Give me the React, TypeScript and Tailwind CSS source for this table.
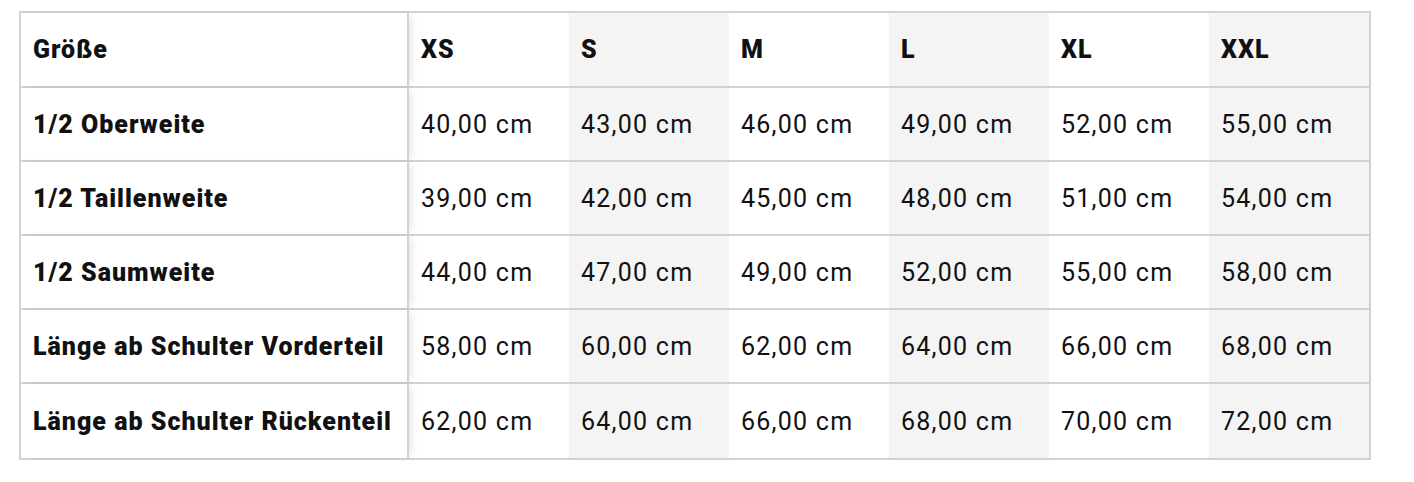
const sizes = ['XS', 'S', 'M', 'L', 'XL', 'XXL'];

const rows: { label: string; values: string[] }[] = [
  { label: '1/2 Oberweite', values: ['40,00', '43,00', '46,00', '49,00', '52,00', '55,00'] },
  { label: '1/2 Taillenweite', values: ['39,00', '42,00', '45,00', '48,00', '51,00', '54,00'] },
  { label: '1/2 Saumweite', values: ['44,00', '47,00', '49,00', '52,00', '55,00', '58,00'] },
  { label: 'Länge ab Schulter Vorderteil', values: ['58,00', '60,00', '62,00', '64,00', '66,00', '68,00'] },
  { label: 'Länge ab Schulter Rückenteil', values: ['62,00', '64,00', '66,00', '68,00', '70,00', '72,00'] },
];

function Cell({ index, bold, children }: { index: number; bold?: boolean; children: React.ReactNode }) {
  const shaded = index % 2 === 1;
  return (
    <div
      className={
        'flex items-center pl-3 ' +
        (shaded ? 'bg-[#f4f4f4] ' : 'bg-white ') +
        (bold ? 'font-black tracking-[0.04em]' : 'font-normal tracking-[0.05em]')
      }
    >
      {children}
    </div>
  );
}

function Row({ label, cells, last, header }: { label: string; cells: string[]; last?: boolean; header?: boolean }) {
  return (
    <div
      className={
        'grid grid-cols-[388px_repeat(6,160px)] box-border ' +
        (header ? 'h-[75px] ' : 'h-[74px] ') +
        (last ? '' : 'border-b-2 border-[#d2d2d2]')
      }
    >
      <div className="relative z-10 flex items-center pl-3 font-black tracking-[0.04em] bg-white border-r-2 border-[#d2d2d2] shadow-[5px_0_8px_-3px_rgba(0,0,0,0.12)]">
        {label}
      </div>
      {cells.map((c, i) => (
        <Cell key={i} index={i} bold={header}>
          {c}
        </Cell>
      ))}
    </div>
  );
}

export default function App() {
  return (
    <div className="min-h-[482px] bg-white pt-[11px] pl-[19px] font-['Roboto',sans-serif] text-[25px] text-[#111] leading-none">
      <div className="w-fit border-2 border-[#d2d2d2]">
        <Row header label="Größe" cells={sizes} />
        {rows.map((r, i) => (
          <Row key={r.label} label={r.label} cells={r.values.map((v) => v + ' cm')} last={i === rows.length - 1} />
        ))}
      </div>
    </div>
  );
}
